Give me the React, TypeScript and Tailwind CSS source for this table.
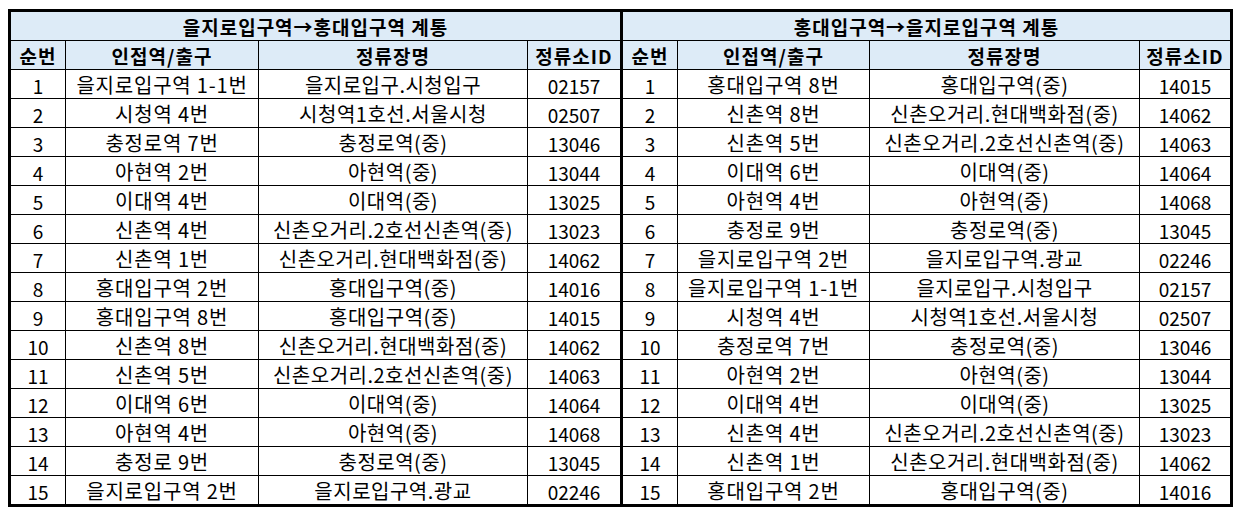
import React from "react";

type Row = [string, string, string, string];

const leftRows: Row[] = [
  ["1", "을지로입구역 1-1번", "을지로입구.시청입구", "02157"],
  ["2", "시청역 4번", "시청역1호선.서울시청", "02507"],
  ["3", "충정로역 7번", "충정로역(중)", "13046"],
  ["4", "아현역 2번", "아현역(중)", "13044"],
  ["5", "이대역 4번", "이대역(중)", "13025"],
  ["6", "신촌역 4번", "신촌오거리.2호선신촌역(중)", "13023"],
  ["7", "신촌역 1번", "신촌오거리.현대백화점(중)", "14062"],
  ["8", "홍대입구역 2번", "홍대입구역(중)", "14016"],
  ["9", "홍대입구역 8번", "홍대입구역(중)", "14015"],
  ["10", "신촌역 8번", "신촌오거리.현대백화점(중)", "14062"],
  ["11", "신촌역 5번", "신촌오거리.2호선신촌역(중)", "14063"],
  ["12", "이대역 6번", "이대역(중)", "14064"],
  ["13", "아현역 4번", "아현역(중)", "14068"],
  ["14", "충정로 9번", "충정로역(중)", "13045"],
  ["15", "을지로입구역 2번", "을지로입구역.광교", "02246"],
];

const rightRows: Row[] = [
  ["1", "홍대입구역 8번", "홍대입구역(중)", "14015"],
  ["2", "신촌역 8번", "신촌오거리.현대백화점(중)", "14062"],
  ["3", "신촌역 5번", "신촌오거리.2호선신촌역(중)", "14063"],
  ["4", "이대역 6번", "이대역(중)", "14064"],
  ["5", "아현역 4번", "아현역(중)", "14068"],
  ["6", "충정로 9번", "충정로역(중)", "13045"],
  ["7", "을지로입구역 2번", "을지로입구역.광교", "02246"],
  ["8", "을지로입구역 1-1번", "을지로입구.시청입구", "02157"],
  ["9", "시청역 4번", "시청역1호선.서울시청", "02507"],
  ["10", "충정로역 7번", "충정로역(중)", "13046"],
  ["11", "아현역 2번", "아현역(중)", "13044"],
  ["12", "이대역 4번", "이대역(중)", "13025"],
  ["13", "신촌역 4번", "신촌오거리.2호선신촌역(중)", "13023"],
  ["14", "신촌역 1번", "신촌오거리.현대백화점(중)", "14062"],
  ["15", "홍대입구역 2번", "홍대입구역(중)", "14016"],
];

const headers = ["순번", "인접역/출구", "정류장명", "정류소ID"];

const cellText = [
  "text-[19px]",
  "text-[20px] tracking-[0.8px]",
  "text-[20px] tracking-[0.5px]",
  "text-[19px]",
];

function Half({ title, rows, cols }: { title: string; rows: Row[]; cols: string[] }) {
  return (
    <div className="flex flex-col">
      <div className="h-[29px] border-b border-black bg-[#ddebf7] flex items-center justify-center font-bold text-[19px] tracking-[1px] leading-none pt-[1px]">
        {title}
      </div>
      <div className="flex h-[29px] border-b border-black bg-[#ddebf7] font-bold text-[19px] tracking-[1px] leading-none">
        {headers.map((h, i) => (
          <div
            key={i}
            className={`${cols[i]} flex items-center justify-center pt-[1px] ${i < 3 ? "border-r border-black" : ""}`}
          >
            {h}
          </div>
        ))}
      </div>
      {rows.map((r, ri) => (
        <div
          key={ri}
          className={`flex leading-none ${ri < rows.length - 1 ? "h-[29px] border-b border-black" : "h-[28px]"}`}
        >
          {r.map((c, i) => (
            <div
              key={i}
              className={`${cols[i]} ${cellText[i]} flex items-center justify-center pt-[2px] whitespace-nowrap ${i < 3 ? "border-r border-black" : ""}`}
            >
              {c}
            </div>
          ))}
        </div>
      ))}
    </div>
  );
}

export default function App() {
  return (
    <div
      className="bg-white w-[1244px] h-[519px] pt-[9px] pl-[8px] text-black"
      style={{ fontFamily: '"Noto Sans CJK KR", "Noto Sans", sans-serif' }}
    >
      <div className="flex w-[1225px] border-[3px] border-black">
        <Half
          title="을지로입구역→홍대입구역 계통"
          rows={leftRows}
          cols={["w-[55px]", "w-[193px]", "w-[269px]", "w-[92px]"]}
        />
        <div className="w-[3px] bg-black" />
        <Half
          title="홍대입구역→을지로입구역 계통"
          rows={rightRows}
          cols={["w-[55px]", "w-[192px]", "w-[270px]", "w-[90px]"]}
        />
      </div>
    </div>
  );
}
